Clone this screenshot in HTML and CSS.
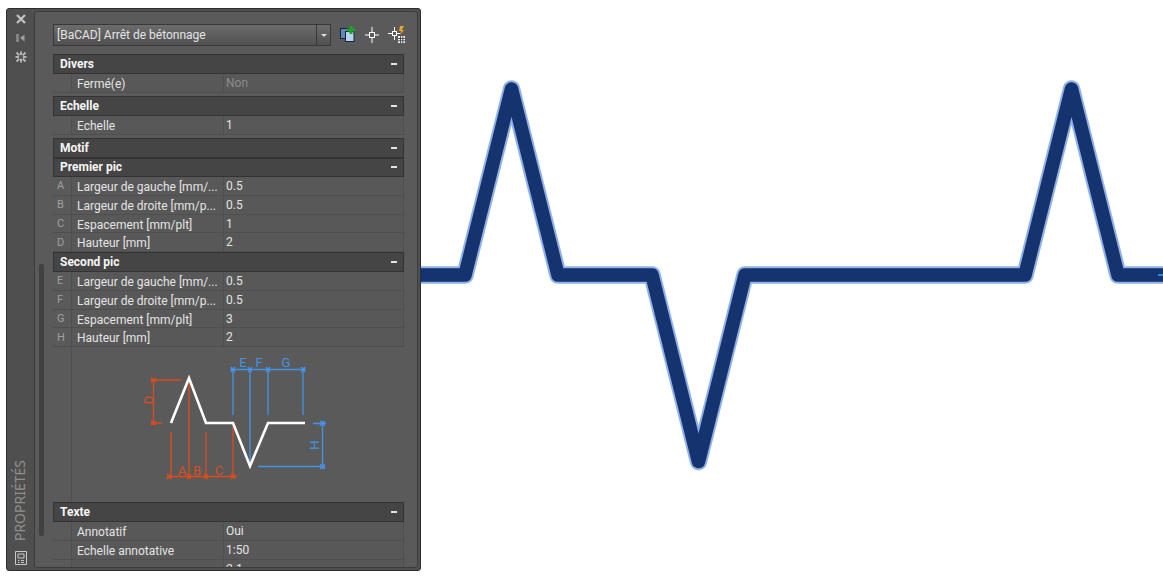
FILE: index.html

```html
<!DOCTYPE html>
<html lang="fr">
<head>
    <meta charset="UTF-8">
    <meta name="viewport" content="width=device-width, initial-scale=1.0">
    <title>Propriétés</title>
    <link rel="stylesheet" href="styles.css">
</head>
<body>
    <div class="palette">
        <div class="titlebar">
            <svg class="bar-icon" width="12" height="12" viewBox="0 0 12 12"><path d="M2 2l8 8M10 2l-8 8" stroke="#c4c4c4" stroke-width="2.2" fill="none"/></svg>
            <svg class="bar-icon" width="12" height="12" viewBox="0 0 12 12"><path d="M2.500 2v8" stroke="#8c8c8c" stroke-width="2.500" fill="none"/><path d="M5 6l4.500-3.500v7z" fill="#a0a0a0"/></svg>
            <svg class="bar-icon" width="12" height="12" viewBox="0 0 12 12"><path d="M1.500 1.500l9 9M10.500 1.500l-9 9M6 .5v11M.5 6h11" stroke="#b4b4b4" stroke-width="2" fill="none"/><rect x="4" y="4" width="4" height="4" fill="#5a5a5a"/></svg>
            <div class="bar-title">PROPRIÉTÉS</div>
            <svg class="bar-foot" width="12" height="14" viewBox="0 0 12 14"><path d="M.5 .5h11v13H.5zM3 3h6v4H3zM3 9.500h1.500M6 9.500h3M3 11.500h1.500M6 11.500h3" stroke="#c8c8c8" fill="none"/></svg>
        </div>
        <div class="content">
            <div class="scroll-track"><div class="scroll-thumb"></div></div>
            <div class="props">
                <div class="top-bar">
                    <div class="select">
                        <span class="select-text">[BaCAD] Arrêt de bétonnage</span>
                        <span class="select-arrow"></span>
                    </div>
                    <svg class="tool" width="18" height="18" viewBox="0 0 18 18">
                        <rect x="1.500" y="2.500" width="9" height="10" fill="#5f86b4" stroke="#10233d"/>
                        <rect x="6.500" y="5.500" width="8.500" height="10" fill="#b9d3ee" stroke="#10233d"/>
                        <path d="M12 0v8M8 4h8" stroke="#1fa32a" stroke-width="3"/>
                    </svg>
                    <svg class="tool" width="18" height="18" viewBox="0 0 18 18">
                        <rect x="6.500" y="6.500" width="5" height="5" fill="none" stroke="#fff"/>
                        <path d="M9 1v5.500M9 11.500V17M2 9h4.500M11.500 9H16" stroke="#fff"/>
                    </svg>
                    <svg class="tool" width="20" height="20" viewBox="0 0 20 20">
                        <rect x="5.500" y="6.500" width="4" height="4" fill="none" stroke="#fff"/>
                        <path d="M7.500 2v4.500M7.500 10.500V15M1 8.500h4.500M9.500 8.500H13" stroke="#fff"/>
                        <path d="M13 1h4l-2 4h2l-4 5 1-4h-2z" fill="#e8a32a"/>
                        <path d="M11 11h7v7h-7z" fill="#f0f0f0"/>
                        <path d="M11 13.500h7M11 15.800h7M13.500 11v7M15.800 11v7" stroke="#333" stroke-width=".8"/>
                    </svg>
                </div>

                <div class="section">
                    <div class="section-head">Divers<span class="minus"></span></div>
                    <div class="row"><span class="key"></span><span class="label">Fermé(e)</span><span class="value muted">Non</span></div>
                </div>
                <div class="section">
                    <div class="section-head">Echelle<span class="minus"></span></div>
                    <div class="row"><span class="key"></span><span class="label">Echelle</span><span class="value">1</span></div>
                </div>
                <div class="section tight">
                    <div class="section-head">Motif<span class="minus"></span></div>
                </div>
                <div class="section tight">
                    <div class="section-head short">Premier pic<span class="minus"></span></div>
                    <div class="row"><span class="key">A</span><span class="label">Largeur de gauche [mm/...</span><span class="value">0.5</span></div>
                    <div class="row"><span class="key">B</span><span class="label">Largeur de droite [mm/p...</span><span class="value">0.5</span></div>
                    <div class="row"><span class="key">C</span><span class="label">Espacement [mm/plt]</span><span class="value">1</span></div>
                    <div class="row"><span class="key">D</span><span class="label">Hauteur [mm]</span><span class="value">2</span></div>
                </div>
                <div class="section tight">
                    <div class="section-head">Second pic<span class="minus"></span></div>
                    <div class="row"><span class="key">E</span><span class="label">Largeur de gauche [mm/...</span><span class="value">0.5</span></div>
                    <div class="row"><span class="key">F</span><span class="label">Largeur de droite [mm/p...</span><span class="value">0.5</span></div>
                    <div class="row"><span class="key">G</span><span class="label">Espacement [mm/plt]</span><span class="value">3</span></div>
                    <div class="row"><span class="key">H</span><span class="label">Hauteur [mm]</span><span class="value">2</span></div>
                    <div class="preview">
                        <!-- viewBox uses the same x/y as the whole page so the numbers are easy to check -->
                        <svg class="preview-svg" width="333" height="155" viewBox="71 347 333 155">
                            <g stroke="#dc4c1c" stroke-width="1.300" fill="none">
                                <path d="M181 380H151M162 423H151M153.500 378v47"/>
                                <path d="M171 432v46M189 380v98M206 432v46M233 423v55M167 476.500h70"/>
                                <path d="M167 474l4 5M171 474l-4 5M187 474l4 5M191 474l-4 5M204 474l4 5M208 474l-4 5M231 474l4 5M235 474l-4 5M151 378l5 4M156 378l-5 4M151 421l5 4M156 421l-5 4"/>
                            </g>
                            <g stroke="#4493e6" stroke-width="1.300" fill="none">
                                <path d="M230 369.500h76M233 369v46M250 369v97M268 369v46M303 369v46"/>
                                <path d="M258 466.500h67M313 423.500h13M322.500 421v48"/>
                                <path d="M231 367l4 5M235 367l-4 5M248 367l4 5M252 367l-4 5M266 367l4 5M270 367l-4 5M301 367l4 5M305 367l-4 5M320 421l5 5M325 421l-5 5M320 464l5 5M325 464l-5 5"/>
                            </g>
                            <path d="M171 423L189 378L206 423H233L250 466L268 423H305" fill="none" stroke="#fff" stroke-width="2.600"/>
                            <g class="dim-orange">
                                <text x="182" y="475" text-anchor="middle">A</text>
                                <text x="197" y="475" text-anchor="middle">B</text>
                                <text x="219" y="475" text-anchor="middle">C</text>
                                <text x="0" y="0" text-anchor="middle" transform="translate(153 400) rotate(-90)">D</text>
                            </g>
                            <g class="dim-blue">
                                <text x="243" y="367" text-anchor="middle">E</text>
                                <text x="259" y="367" text-anchor="middle">F</text>
                                <text x="286" y="367" text-anchor="middle">G</text>
                                <text x="0" y="0" text-anchor="middle" transform="translate(319 445) rotate(-90)">H</text>
                            </g>
                        </svg>
                    </div>
                </div>
                <div class="section tight">
                    <div class="section-head">Texte<span class="minus"></span></div>
                    <div class="row"><span class="key"></span><span class="label">Annotatif</span><span class="value">Oui</span></div>
                    <div class="row"><span class="key"></span><span class="label">Echelle annotative</span><span class="value">1:50</span></div>
                    <div class="row"><span class="key"></span><span class="label"></span><span class="value">2.1</span></div>
                </div>
            </div>
        </div>
    </div>

    <svg class="drawing" width="742" height="577" viewBox="421 0 742 577">
        <path d="M415 275H465L511.500 89L558 275H652L698.500 461.500L745 275H1025L1071.500 89L1118 275H1170" fill="none" stroke="#8fb1ea" stroke-width="17.500" stroke-linejoin="round"/>
        <path d="M415 275H465L511.500 89L558 275H652L698.500 461.500L745 275H1025L1071.500 89L1118 275H1170" fill="none" stroke="#14336f" stroke-width="13.500" stroke-linejoin="round"/>
        <path d="M1158 275h5" stroke="#2b86d8" stroke-width="2"/>
    </svg>
</body>
</html>
```

FILE: styles.css

```css
html, body {
    height: 100%;
}
body {
    margin: 0;
    background-color: #ffffff;
    font-family: Roboto, "Noto Sans", sans-serif;
    font-size: 12px;
    color: #e4e4e4;
    display: flex;
    align-items: flex-start;
    overflow: hidden;
}
.palette {
    width: 415px;
    height: 563px;
    margin: 8px 0 0 6px;
    flex: none;
    display: flex;
    box-sizing: border-box;
    background-color: #4f4f4f;
    border: 1px solid #2e2e2e;
    border-radius: 3px;
    overflow: hidden;
}
.titlebar {
    width: 27px;
    flex: none;
    display: flex;
    flex-direction: column;
    align-items: center;
    padding-top: 4px;
    box-sizing: border-box;
}
.bar-icon {
    margin-bottom: 7px;
}
.bar-title {
    margin-top: auto;
    margin-right: 2px;
    writing-mode: vertical-rl;
    transform: rotate(180deg);
    color: #8f8f8f;
    font-family: "Noto Sans", sans-serif;
    font-size: 14px;
    line-height: 16px;
}
.bar-foot {
    margin: 10px 0 5px;
}
.content {
    flex: 1;
    display: flex;
    margin: 2px 2px 2px 0;
    background-color: #5a5a5a;
    border: 1px solid #3c3c3c;
    border-radius: 3px;
    overflow: hidden;
}
.scroll-track {
    width: 18px;
    flex: none;
    padding-left: 4px;
    box-sizing: border-box;
}
.scroll-thumb {
    width: 5px;
    height: 272px;
    margin-top: 252px;
    background-color: #414141;
    border-radius: 2px;
}
.props {
    width: 351px;
    padding-top: 12px;
    flex: none;
}
.top-bar {
    display: flex;
    align-items: center;
    height: 22px;
    margin-bottom: 8px;
}
.select {
    width: 278px;
    height: 22px;
    box-sizing: border-box;
    flex: none;
    display: flex;
    align-items: center;
    border: 1px solid #383838;
    background: linear-gradient(#6c6c6c, #505050);
    margin-right: 8px;
}
.select-text {
    flex: 1;
    padding-left: 3px;
    white-space: nowrap;
}
.select-arrow {
    width: 13px;
    height: 100%;
    border-left: 1px solid #383838;
    position: relative;
}
.select-arrow::after {
    content: "";
    position: absolute;
    left: 4px;
    top: 9px;
    border-left: 3px solid transparent;
    border-right: 3px solid transparent;
    border-top: 3px solid #dcdcdc;
}
.tool {
    flex: none;
    margin-right: 6px;
}
.section {
    margin-bottom: 3.25px;
}
.section.tight {
    margin-bottom: 0;
}
.section-head {
    height: 20px;
    box-sizing: border-box;
    display: flex;
    align-items: center;
    justify-content: space-between;
    padding: 0 6px 1px 6px;
    background-color: #454545;
    border: 1px solid #333333;
    font-weight: 700;
    color: #f6f6f6;
}
.section-head.short {
    height: 19px;
    padding-bottom: 2px;
}
.minus {
    width: 6px;
    height: 2px;
    background-color: #e4e4e4;
}
.row {
    height: 18.75px;
    display: flex;
    align-items: center;
    box-sizing: border-box;
    border-bottom: 1px solid #4f4f4f;
    white-space: nowrap;
    overflow: hidden;
}
.key {
    width: 18px;
    flex: none;
    padding-left: 4px;
    box-sizing: border-box;
    font-size: 11px;
    color: #a0a0a0;
}
.label {
    width: 153px;
    flex: none;
    box-sizing: border-box;
    height: 100%;
    line-height: 20px;
    padding-left: 5px;
    background-color: #585858;
    border-left: 1px solid #4f4f4f;
    border-right: 1px solid #4f4f4f;
}
.value {
    flex: 1;
    height: 100%;
    line-height: 19px;
    padding-left: 2px;
    background-color: #585858;
    border-right: 1px solid #4f4f4f;
}
.value.muted {
    color: #8c8c8c;
}
.preview {
    height: 155px;
    margin-left: 18px;
    border-left: 1px solid #4f4f4f;
    box-sizing: border-box;
}
.preview-svg {
    display: block;
    margin-left: -1px;
}
.dim-orange text {
    font-size: 13px;
    fill: #dc4c1c;
}
.dim-blue text {
    font-size: 13px;
    fill: #4493e6;
}
.drawing {
    display: block;
    flex: none;
}
```
